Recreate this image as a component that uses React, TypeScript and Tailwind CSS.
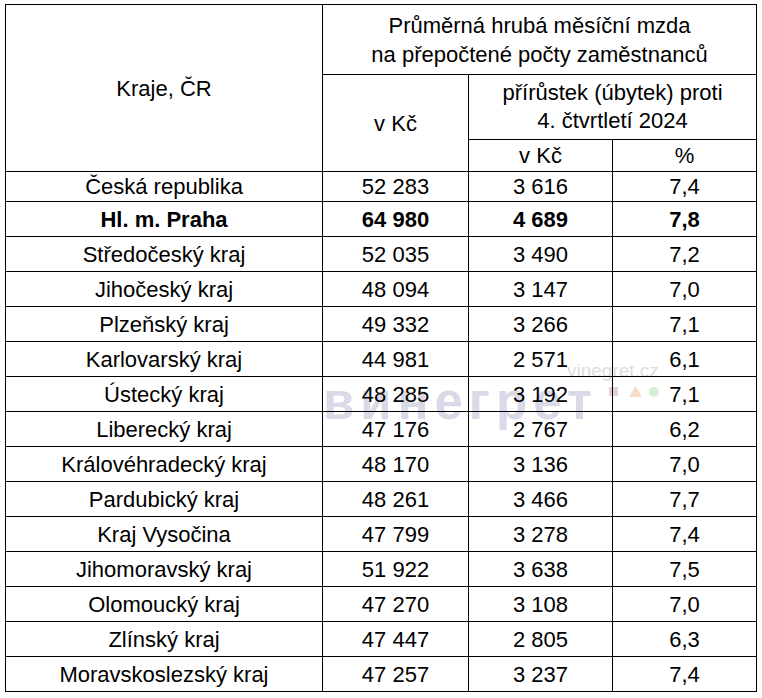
const rows: [string, string, string, string, boolean?][] = [
  ["Hl. m. Praha", "64 980", "4 689", "7,8", true],
  ["Středočeský kraj", "52 035", "3 490", "7,2"],
  ["Jihočeský kraj", "48 094", "3 147", "7,0"],
  ["Plzeňský kraj", "49 332", "3 266", "7,1"],
  ["Karlovarský kraj", "44 981", "2 571", "6,1"],
  ["Ústecký kraj", "48 285", "3 192", "7,1"],
  ["Liberecký kraj", "47 176", "2 767", "6,2"],
  ["Královéhradecký kraj", "48 170", "3 136", "7,0"],
  ["Pardubický kraj", "48 261", "3 466", "7,7"],
  ["Kraj Vysočina", "47 799", "3 278", "7,4"],
  ["Jihomoravský kraj", "51 922", "3 638", "7,5"],
  ["Olomoucký kraj", "47 270", "3 108", "7,0"],
  ["Zlínský kraj", "47 447", "2 805", "6,3"],
  ["Moravskoslezský kraj", "47 257", "3 237", "7,4"],
];

const cell = "border border-black p-0 text-center align-middle";

export default function App() {
  return (
    <div
      className="relative w-[762px] h-[698px] bg-white text-black overflow-hidden"
      style={{ fontFamily: "'Liberation Sans', Arial, sans-serif" }}
    >
      {/* watermark */}
      <div className="absolute inset-0 pointer-events-none">
        <div className="absolute left-[323px] top-[376px] text-[51px] leading-none font-bold tracking-[6px] text-[#d9d9e7]">
          винегрет
        </div>
        <div className="absolute left-[567px] top-[361px] text-[19px] leading-none text-[#dedede]">vinegret.cz</div>
        <div className="absolute left-[609px] top-[387px] w-[9px] h-[9px] bg-[#e6d0d7]" />
        <svg className="absolute left-[629px] top-[386px]" width="13" height="11" viewBox="0 0 13 11">
          <polygon points="6.5,0 13,11 0,11" fill="#f9dcc7" />
        </svg>
        <div className="absolute left-[649px] top-[387px] w-[10px] h-[10px] rounded-full bg-[#d6ecd4]" />
      </div>

      <table className="relative ml-[5px] mt-[4px] border-collapse text-[22px] leading-[29px]">
        <colgroup>
          <col className="w-[317px]" />
          <col className="w-[146px]" />
          <col className="w-[144px]" />
          <col className="w-[144px]" />
        </colgroup>
        <tbody>
          <tr className="h-[70px]">
            <td rowSpan={3} className={cell}>Kraje, ČR</td>
            <td colSpan={3} className={cell}>
              Průměrná hrubá měsíční mzda
              <br />
              na přepočtené počty zaměstnanců
            </td>
          </tr>
          <tr className="h-[65px]">
            <td rowSpan={2} className={cell}>v Kč</td>
            <td colSpan={2} className={`${cell} leading-[28px]`}>
              přírůstek (úbytek) proti
              <br />
              4. čtvrtletí 2024
            </td>
          </tr>
          <tr className="h-[32px]">
            <td className={cell}>v Kč</td>
            <td className={cell}>%</td>
          </tr>
          <tr className="h-[30px]">
            <td className={cell}>Česká republika</td>
            <td className={cell}>52 283</td>
            <td className={cell}>3 616</td>
            <td className={cell}>7,4</td>
          </tr>
          {rows.map(([name, kc, diff, pct, bold]) => (
            <tr key={name} className={`h-[35px] ${bold ? "font-bold" : ""}`}>
              <td className={cell}>{name}</td>
              <td className={cell}>{kc}</td>
              <td className={cell}>{diff}</td>
              <td className={cell}>{pct}</td>
            </tr>
          ))}
        </tbody>
      </table>
    </div>
  );
}
